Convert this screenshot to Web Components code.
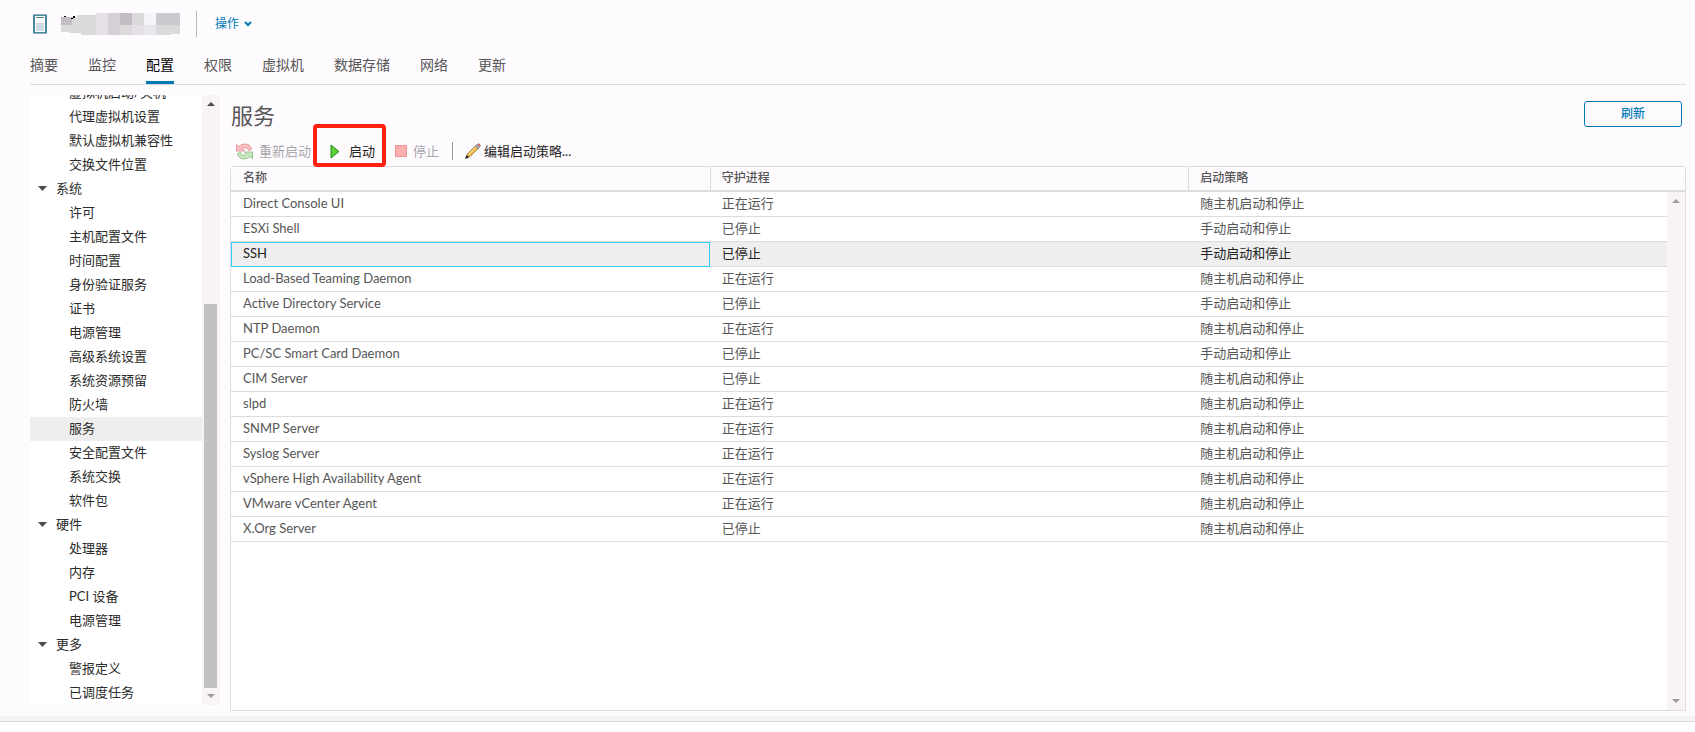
<!DOCTYPE html>
<html lang="zh-CN">
<head>
<meta charset="utf-8">
<title>服务</title>
<style>
body { margin: 0; background: #fefbff; color: #565656; font: 13px/24px Lato, "Noto Sans CJK SC", sans-serif; }
</style>
</head>
<body>
<vs-app></vs-app>
<script>
const define = (name, markup) => customElements.define(name, class extends HTMLElement {
  constructor() {
    super();
    this.attachShadow({ mode: 'open' }).innerHTML = '<style>*,*::before,*::after{box-sizing:border-box}</style>' + markup(this);
  }
});

define('vs-header', () => `
<style>
:host { display: flex; align-items: center; height: 47px; padding-left: 33px; }
.mask { margin-left: 14px; }
.bar { width: 1px; height: 26px; margin: 0 18px 0 16px; background: #bdb9bf; }
button { display: flex; align-items: center; gap: 5px; border: 0; padding: 0; background: none; color: #0079b8; font: inherit; font-size: 12px; }
</style>
<svg width="14" height="20" viewBox="0 0 14 20"><path d="M1 1H13V19H1Z" fill="#fff" stroke="#4b87a3" stroke-width="2"/><path d="M0 .5H14M0 19.5H14" stroke="#8eb1c2"/><path d="M3 3.500H11" stroke="#4b87a3"/><path d="M3 9H11V17H3Z" fill="#cdd9e3"/></svg>
<svg class="mask" width="119" height="22" viewBox="0 0 119 22" shape-rendering="crispEdges">
<path d="M0 4H16V2H36V0H119V21H110V22H20V20H8V19H0Z" fill="#dcd9dd"/>
<path d="M0 4H11V12H0Z" fill="#c1bdc3"/><path d="M59 0H71V12H59Z" fill="#c2bcc2"/><path d="M83 0H95V12H83Z" fill="#f5f4f8"/><path d="M95 0H119V12H95Z" fill="#cccace"/><path d="M83 12H95V22H83Z" fill="#e7e6ea"/><path d="M35 0H47V22H35ZM71 12H83V22H71Z" fill="#e4e0e5"/><path d="M47 0H59V22H47Z" fill="#d5d1d6"/>
<path d="M3 3H5V4H3ZM12 3H14V5H12ZM10 5H12V6H10Z" fill="#000"/></svg>
<span class="bar"></span>
<button type="button">操作<svg width="8" height="6" viewBox="0 0 8 6"><path d="M1 1L4 4L7 1" fill="none" stroke="#0079b8" stroke-width="2"/></svg></button>`);

define('vs-tabs', () => `
<style>
:host { display: block; margin: 0 9px 0 30px; border-bottom: 1px solid #dddcdf; }
nav { display: flex; gap: 30px; }
a { height: 37px; line-height: 36px; font-size: 14px; color: #565656; text-decoration: none; }
a[aria-current] { color: #000; border-bottom: 3px solid #0079b8; }
</style>
<nav>${['摘要','监控','配置','权限','虚拟机','数据存储','网络','更新'].map(t => `<a href="#"${t === '配置' ? ' aria-current="page"' : ''}>${t}</a>`).join('')}</nav>`);

define('vs-scrollbar', el => `
<style>
:host { display: flex; flex-direction: column; align-items: center; width: 18px; flex: none; background: #f7f3f7; padding: 7px 1px 7px 0; }
i { width: 13px; background: #c4c1c5; margin: auto 0 6px; height: ${el.getAttribute('thumb') || '0'}; }
svg { flex: none; fill: #9d9a9e; }
svg.up { fill: var(--up, #9d9a9e); }
</style>
<svg class="up" width="8" height="4" viewBox="0 0 8 4"><path d="M4 0L8 4H0Z"/></svg><i></i>
<svg width="8" height="4" viewBox="0 0 8 4"><path d="M0 0H8L4 4Z"/></svg>`);

define('vs-tree', () => {
  const groups = [
    ['', ['虚拟机启动/关机','代理虚拟机设置','默认虚拟机兼容性','交换文件位置']],
    ['系统', ['许可','主机配置文件','时间配置','身份验证服务','证书','电源管理','高级系统设置','系统资源预留','防火墙','服务','安全配置文件','系统交换','软件包']],
    ['硬件', ['处理器','内存','PCI 设备','电源管理']],
    ['更多', ['警报定义','已调度任务']]];
  return `
<style>
:host { display: flex; width: 190px; flex: none; min-height: 0; }
nav { flex: 1; display: flex; flex-direction: column; justify-content: flex-end; overflow: hidden; background: #fff; }
a, button { flex: none; display: flex; align-items: center; height: 24px; border: 0; font: inherit; line-height: 22px; color: #2b2b2b; text-decoration: none; background: none; }
a { padding: 0 0 2px 39px; }
a[aria-current] { background: #eee; }
button { padding: 0 0 2px 8px; gap: 9px; }
vs-scrollbar { --up: #4b4b4b; }
</style>
<nav>${groups.map(([g, items]) => (g ? `<button type="button" aria-expanded="true"><svg width="9" height="5" viewBox="0 0 9 5"><path d="M0 0H9L4.500 5Z" fill="#4b4b4b"/></svg>${g}</button>` : '') + items.map(i => `<a href="#"${i === '服务' ? ' aria-current="page"' : ''}>${i}</a>`).join('')).join('')}</nav>
<vs-scrollbar thumb="64.5%"></vs-scrollbar>`;
});

define('vs-tool', el => `
<style>
:host { display: block; }
button { display: flex; align-items: center; height: 24px; padding: 0; gap: var(--gap, 6px); border: 0; background: none; font: inherit; color: #222; white-space: nowrap; }
button:disabled { color: #a9a6aa; }
</style>
<button type="button"${el.hasAttribute('off') ? ' disabled' : ''}><slot name="icon"></slot><slot></slot></button>`);

define('vs-toolbar', () => `
<style>
:host { display: flex; align-items: center; height: 30px; padding: 0 0 0 6px; }
svg { display: block; }
.start { --gap: 9px; position: relative; margin: 0 20px 0 19px; }
.start::after { content: ""; position: absolute; left: -17px; top: -15px; width: 73px; height: 43px; border: 4px solid #ff2010; border-radius: 4px; pointer-events: none; z-index: 1; }
.bar { width: 1px; height: 18px; margin: 0 12px 0 13px; background: #9c999d; }
.edit { --gap: 3px; }
</style>
<vs-tool off><svg slot="icon" width="17" height="17" viewBox="0 0 17 17"><path d="M.5 1.500L3 3.500C6 .5 12 0 14.500 3.500L15.500 6.500L12.500 7.500C11.500 4.500 8.500 4 6.500 6L8.500 8H.5Z" fill="#f8c0c1" stroke="#e8989b"/><path d="M16.500 15.500L14 13.500C11 16.500 5 17 2.500 13.500L1.500 10.500L4.500 9.500C5.500 12.500 8.500 13 10.500 11L8.500 9H16.500Z" fill="#c8e6c0" stroke="#98c492"/></svg>重新启动</vs-tool>
<div class="start"><vs-tool><svg slot="icon" width="10" height="15" viewBox="0 0 10 15"><path d="M1 1L9 7.500L1 14Z" fill="#5fd035" stroke="#208618"/></svg>启动</vs-tool></div>
<vs-tool off><svg slot="icon" width="12" height="12" viewBox="0 0 12 12"><path d="M.5.5H11.500V11.500H.5Z" fill="#fab0b0" stroke="#ea9496"/></svg>停止</vs-tool>
<span class="bar"></span>
<vs-tool class="edit"><svg slot="icon" width="16" height="16" viewBox="0 0 16 16"><path d="M1.500 14.500L2.500 11L10.500 3L13 5.500L5 13.500Z" fill="#f7c452" stroke="#9a6a1c"/><path d="M3.500 11.500L11 4" stroke="#fde9a0"/><path d="M10.500 3L12 1.500L14.500 4L13 5.500Z" fill="#c9c6ca" stroke="#77747a"/><path d="M12.500 1.500L13.500 .5L15.500 2.500L14.500 3.500Z" fill="#e88a8c" stroke="#b0585c"/><path d="M0 16L1.500 12L4 14.500Z" fill="#222"/></svg>编辑启动策略...</vs-tool>`);

define('vs-services', () => {
  const run = '正在运行', stop = '已停止', auto = '随主机启动和停止', hand = '手动启动和停止';
  const rows = [['Direct Console UI',run,auto],['ESXi Shell',stop,hand],['SSH',stop,hand],['Load-Based Teaming Daemon',run,auto],['Active Directory Service',stop,hand],['NTP Daemon',run,auto],['PC/SC Smart Card Daemon',stop,hand],['CIM Server',stop,auto],['slpd',run,auto],['SNMP Server',run,auto],['Syslog Server',run,auto],['vSphere High Availability Agent',run,auto],['VMware vCenter Agent',run,auto],['X.Org Server',stop,auto]];
  return `
<style>
:host { display: flex; flex: 1; min-height: 0; border: 1px solid #dddcdf; border-radius: 3px 3px 0 0; background: #fff; }
.body { flex: 1; overflow: hidden; }
table { width: 100%; table-layout: fixed; border-collapse: separate; border-spacing: 0; }
th { height: 25px; padding: 0 12px; text-align: left; font-size: 12px; font-weight: 500; line-height: 22px; background: #fefbff; border-bottom: 2px solid #dddcdf; vertical-align: top; }
th + th { border-left: 1px solid #dddcdf; padding-left: 11px; }
td { height: 25px; padding: 0 12px; line-height: 22px; border-bottom: 1px solid #dddcdf; white-space: nowrap; vertical-align: top; }
.on td { background: #eee; color: #222; }
.on td:first-child { outline: 1px solid #33ccff; outline-offset: -1px; }
.rail { display: flex; flex-direction: column; }
.cap { height: 25px; background: #fefbff; border-bottom: 2px solid #dddcdf; }
vs-scrollbar { flex: 1; }
</style>
<div class="body"><table><thead><tr><th>名称</th><th>守护进程</th><th>启动策略</th></tr></thead>
<tbody>${rows.map(r => `<tr${r[0] === 'SSH' ? ' class="on"' : ''}>${r.map(c => `<td>${c}</td>`).join('')}</tr>`).join('')}</tbody></table></div>
<div class="rail"><div class="cap"></div><vs-scrollbar></vs-scrollbar></div>`;
});

define('vs-app', () => `
<style>
:host { display: flex; flex-direction: column; height: 100vh; }
.work { flex: 1; min-height: 0; display: flex; gap: 10px; padding: 0 9px 5px 30px; }
vs-tree { margin: 10px 0 6px; }
main { flex: 1; display: flex; flex-direction: column; min-width: 0; }
.head { display: flex; justify-content: space-between; align-items: flex-end; height: 51px; padding: 0 4px 2px 1px; }
h1 { margin: 0; font-size: 22px; line-height: 36px; font-weight: 400; }
.head button { width: 98px; height: 26px; margin-bottom: 7px; padding: 0; border: 1px solid #0079b8; border-radius: 3px; background: none; color: #0079b8; font: inherit; font-size: 12px; font-weight: 500; line-height: 22px; }
footer { height: 16px; background: #fff; border-top: 5px solid #f4f3f5; }
footer::before { content: ""; display: block; height: 1px; background: #d9d7da; }
</style>
<vs-header></vs-header><vs-tabs></vs-tabs>
<div class="work"><vs-tree></vs-tree>
<main><div class="head"><h1>服务</h1><button type="button">刷新</button></div><vs-toolbar></vs-toolbar><vs-services></vs-services></main></div>
<footer></footer>`);
</script>
</body>
</html>
